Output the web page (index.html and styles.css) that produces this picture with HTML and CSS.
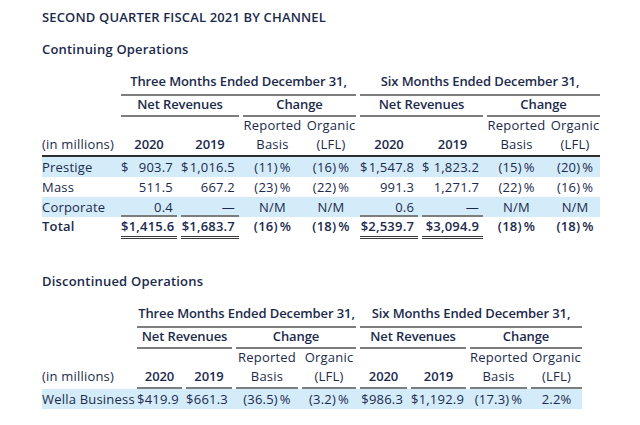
FILE: index.html
```html
<!DOCTYPE html>
<html lang="en">
<head>
<meta charset="utf-8">
<title>Second Quarter Fiscal 2021 by Channel</title>
<link rel="stylesheet" href="styles.css">
</head>
<body>
<div class="page">
  <h1 class="title">SECOND QUARTER FISCAL 2021 BY CHANNEL</h1>

  <h2 class="section">Continuing Operations</h2>
  <table class="fin fin-cont">
    <colgroup>
      <col class="w75"><col class="w60"><col class="w62"><col class="w63"><col class="w54"><col class="w62"><col class="w65"><col class="w63"><col class="w54">
    </colgroup>
    <tr class="r-group">
      <td></td>
      <th colspan="4" class="ul">Three Months Ended December 31,</th>
      <th colspan="4" class="ul">Six Months Ended December 31,</th>
    </tr>
    <tr class="r-sub">
      <td></td>
      <th colspan="2" class="ul">Net Revenues</th>
      <th colspan="2" class="ul">Change</th>
      <th colspan="2" class="ul">Net Revenues</th>
      <th colspan="2" class="ul">Change</th>
    </tr>
    <tr class="r-rep">
      <td></td><td></td><td></td>
      <td class="c">Reported</td><td class="c">Organic</td>
      <td></td><td></td>
      <td class="c">Reported</td><td class="c">Organic</td>
    </tr>
    <tr class="r-yr rule-full">
      <td class="lbl">(in millions)</td>
      <th>2020</th><th>2019</th>
      <td class="c">Basis</td><td class="c">(LFL)</td>
      <th>2020</th><th>2019</th>
      <td class="c">Basis</td><td class="c">(LFL)</td>
    </tr>
    <tr class="r-data hl">
      <td class="lbl">Prestige</td>
      <td class="num"><div class="acct"><span>$</span><span>903.7</span></div></td>
      <td class="num"><div class="acct"><span>$</span><span>1,016.5</span></div></td>
      <td class="c">(11)<span class="pc">%</span></td><td class="c">(16)<span class="pc">%</span></td>
      <td class="num"><div class="acct"><span>$</span><span>1,547.8</span></div></td>
      <td class="num"><div class="acct"><span>$</span><span>1,823.2</span></div></td>
      <td class="c">(15)<span class="pc">%</span></td><td class="c">(20)<span class="pc">%</span></td>
    </tr>
    <tr class="r-data">
      <td class="lbl">Mass</td>
      <td class="num">511.5</td><td class="num">667.2</td>
      <td class="c">(23)<span class="pc">%</span></td><td class="c">(22)<span class="pc">%</span></td>
      <td class="num">991.3</td><td class="num">1,271.7</td>
      <td class="c">(22)<span class="pc">%</span></td><td class="c">(16)<span class="pc">%</span></td>
    </tr>
    <tr class="r-data hl">
      <td class="lbl">Corporate</td>
      <td class="num sub">0.4</td><td class="num sub">&mdash;</td>
      <td class="c">N/M</td><td class="c">N/M</td>
      <td class="num sub">0.6</td><td class="num sub">&mdash;</td>
      <td class="c">N/M</td><td class="c">N/M</td>
    </tr>
    <tr class="r-total">
      <td class="lbl">Total</td>
      <td class="num dbl">$1,415.6</td><td class="num dbl">$1,683.7</td>
      <td class="c">(16)<span class="pc">%</span></td><td class="c">(18)<span class="pc">%</span></td>
      <td class="num dbl">$2,539.7</td><td class="num dbl">$3,094.9</td>
      <td class="c">(18)<span class="pc">%</span></td><td class="c">(18)<span class="pc">%</span></td>
    </tr>
  </table>

  <h2 class="section section-disc">Discontinued Operations</h2>
  <table class="fin fin-disc">
    <colgroup>
      <col class="w91"><col class="w49"><col class="w50"><col class="w66"><col class="w58"><col class="w51"><col class="w59"><col class="w61"><col class="w55">
    </colgroup>
    <tr class="r-group">
      <td></td>
      <th colspan="4" class="ul">Three Months Ended December 31,</th>
      <th colspan="4" class="ul">Six Months Ended December 31,</th>
    </tr>
    <tr class="r-sub">
      <td></td>
      <th colspan="2" class="ul">Net Revenues</th>
      <th colspan="2" class="ul">Change</th>
      <th colspan="2" class="ul">Net Revenues</th>
      <th colspan="2" class="ul">Change</th>
    </tr>
    <tr class="r-rep">
      <td></td><td></td><td></td>
      <td class="c">Reported</td><td class="c">Organic</td>
      <td></td><td></td>
      <td class="c">Reported</td><td class="c">Organic</td>
    </tr>
    <tr class="r-yr">
      <td class="lbl">(in millions)</td>
      <th class="ul">2020</th><th class="ul">2019</th>
      <td class="c ul">Basis</td><td class="c ul">(LFL)</td>
      <th class="ul">2020</th><th class="ul">2019</th>
      <td class="c ul">Basis</td><td class="c ul">(LFL)</td>
    </tr>
    <tr class="r-data hl">
      <td class="lbl">Wella Business</td>
      <td class="num">$419.9</td>
      <td class="num"><div class="acct"><span>$</span><span>661.3</span></div></td>
      <td class="c">(36.5)<span class="pc">%</span></td><td class="c">(3.2)<span class="pc">%</span></td>
      <td class="num">$986.3</td><td class="num">$1,192.9</td>
      <td class="c">(17.3)<span class="pc">%</span></td><td class="c">2.2%</td>
    </tr>
  </table>
</div>
</body>
</html>
```
FILE: styles.css
```css
:root {
  --ink: #1b2a4c;
  --hl: #d4ecfa;
  --rule: #7d7d7d;
  --rule-dark: #2e2e2e;
}

html, body {
  margin: 0;
  padding: 0;
  background: #ffffff;
}

body {
  font-family: "Open Sans", "Liberation Sans", sans-serif;
  font-size: 13px;
  color: var(--ink);
}

.page {
  padding: 9px 0 0 42px;
}

.title {
  margin: 0;
  font-size: 13px;
  line-height: 16px;
  font-weight: 600;
  letter-spacing: 0.15px;
}

.section {
  margin: 16px 0 0;
  font-size: 13px;
  line-height: 16px;
  font-weight: 600;
  letter-spacing: 0.2px;
}

.section-disc {
  margin-top: 33px;
}

.fin {
  margin-top: 16px;
  border-collapse: separate;
  border-spacing: 0;
  table-layout: fixed;
}

.fin-cont { width: 558px; }
.fin-disc { width: 540px; }

.w49 { width: 49px; }
.w50 { width: 50px; }
.w51 { width: 51px; }
.w54 { width: 54px; }
.w55 { width: 55px; }
.w58 { width: 58px; }
.w59 { width: 59px; }
.w60 { width: 60px; }
.w61 { width: 61px; }
.w62 { width: 62px; }
.w63 { width: 63px; }
.w65 { width: 65px; }
.w66 { width: 66px; }
.w75 { width: 75px; }
.w91 { width: 91px; }

.fin td,
.fin th {
  padding: 0 0 0 4px;
  vertical-align: top;
  white-space: nowrap;
  font-weight: 400;
  text-align: center;
  letter-spacing: 0.2px;
}

.fin th {
  font-weight: 600;
  letter-spacing: -0.1px;
}

.fin td.lbl {
  padding-left: 0;
  text-align: left;
}

.fin td.num {
  text-align: right;
  padding-right: 4px;
}

.acct {
  display: flex;
  justify-content: space-between;
}

.pc {
  margin-left: 2px;
}

/* row geometry */
.r-group td, .r-group th { line-height: 16px; padding-bottom: 7px; }
.r-sub td, .r-sub th { line-height: 16px; padding-bottom: 5px; }
.r-rep td, .r-rep th { line-height: 17px; padding-bottom: 2px; }
.r-yr td, .r-yr th { line-height: 16px; padding-bottom: 5px; }
.r-data td, .r-data th { line-height: 20px; }
.r-total td, .r-total th { line-height: 19px; padding-bottom: 4px; font-weight: 600; letter-spacing: 0.2px; }

.hl { background: var(--hl); }

/* rules */
.ul {
  background-image: linear-gradient(var(--rule), var(--rule));
  background-repeat: no-repeat;
  background-position: right 0 bottom 0;
  background-size: calc(100% - 4px) 2px;
}

.rule-full td,
.rule-full th {
  background-image: linear-gradient(var(--rule-dark), var(--rule-dark));
  background-repeat: no-repeat;
  background-position: left 0 bottom 0;
  background-size: 100% 2px;
}

.sub {
  background-image: linear-gradient(var(--rule), var(--rule));
  background-repeat: no-repeat;
  background-position: right 0 bottom 0;
  background-size: calc(100% - 4px) 2px;
}

.dbl {
  background-image:
    linear-gradient(#3a3a3a, #3a3a3a),
    linear-gradient(#3a3a3a, #3a3a3a);
  background-repeat: no-repeat, no-repeat;
  background-position: right 0 bottom 3px, right 0 bottom 1px;
  background-size: calc(100% - 4px) 1px, calc(100% - 4px) 1px;
}
```
